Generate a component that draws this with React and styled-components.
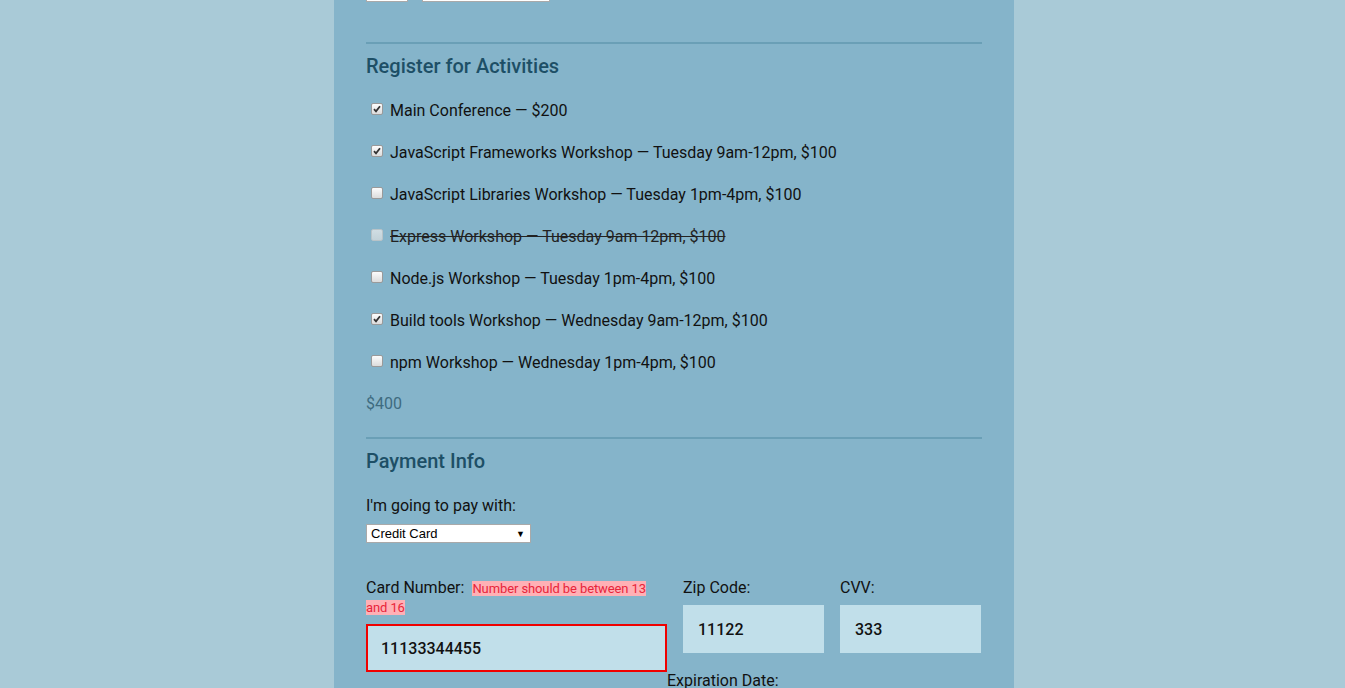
import React from 'react';
import styled, { createGlobalStyle } from 'styled-components';

const GlobalStyle = createGlobalStyle`
  html, body {
    margin: 0;
    padding: 0;
    background: #a9cad7;
    font-family: Roboto, "Liberation Sans", sans-serif;
    overflow: hidden;
  }
`;

const Page = styled.div`
  display: flex;
  justify-content: center;
  padding-left: 3px;
  height: 688px;
  overflow: hidden;
`;

const Form = styled.form`
  width: 616px;
  padding: 0 32px;
  background: #85b4ca;
  color: #111;
`;

const ShirtRow = styled.div`
  display: flex;
  gap: 14px;
  margin-top: -18px;
`;

const FakeSelect = styled.div`
  width: ${p => p.w}px;
  height: 18px;
  background: #fff;
  border: 1px solid #a9a9a9;
`;

const Rule = styled.hr`
  border: 0;
  height: 2px;
  background: #6a9fb6;
  margin: ${p => p.top}px 0 0;
`;

const Heading = styled.h2`
  margin: 0;
  padding-top: 10px;
  font-size: 20px;
  line-height: 24px;
  font-weight: 500;
  color: #1d4f66;
`;

const ActivityList = styled.div`
  margin-top: 11px;
  display: flex;
  flex-direction: column;
`;

const Activity = styled.label`
  display: flex;
  align-items: center;
  height: 42px;
  font-size: 16px;
  color: ${p => (p.disabled ? '#222' : '#111')};
  text-decoration: ${p => (p.disabled ? 'line-through' : 'none')};
`;

const Box = styled.span`
  box-sizing: border-box;
  width: 12px;
  height: 12px;
  margin: -3px 7px 0 5px;
  border: 1px solid ${p => (p.disabled ? '#b8c3c8' : '#9a9a9a')};
  border-radius: 2px;
  background: ${p => (p.disabled ? 'linear-gradient(#d0dde3, #c2d2d9)' : 'linear-gradient(#fcfcfc, #dcdcdc)')};
  display: flex;
  align-items: center;
  justify-content: center;
  flex-shrink: 0;
`;

const Total = styled.div`
  margin-top: 11px;
  font-size: 16px;
  line-height: 20px;
  color: #3e6b80;
`;

const PayLabel = styled.div`
  margin-top: 24px;
  font-size: 16px;
  line-height: 18px;
`;

const Select = styled.div`
  box-sizing: border-box;
  margin-top: 9px;
  width: 165px;
  height: 19px;
  background: #fff;
  border: 1px solid #a9a9a9;
  display: flex;
  align-items: center;
  justify-content: space-between;
  padding: 0 4px;
  font-family: "Liberation Sans", Arial, sans-serif;
  font-size: 13px;
  color: #000;
`;

const Arrow = styled.span`
  font-size: 9px;
  margin-right: 1px;
`;

const CardGrid = styled.div`
  margin-top: 35px;
  display: grid;
  grid-template-columns: 301px 1fr;
`;

const CardCol = styled.div`
  display: flex;
  flex-direction: column;
`;

const FieldLabel = styled.div`
  font-size: 16px;
  line-height: 19px;
`;

const ErrorTip = styled.span`
  margin-left: 8px;
  font-size: 13px;
  line-height: 15px;
  letter-spacing: -0.1px;
  background: #ffb0b5;
  color: #e8253a;
`;

const Input = styled.div`
  box-sizing: border-box;
  height: ${p => p.h}px;
  margin-top: ${p => p.mt}px;
  background: #c1dfea;
  border: 2px solid ${p => (p.error ? '#f00000' : 'transparent')};
  display: flex;
  align-items: center;
  padding-left: 13px;
  font-size: 16px;
  font-weight: 500;
  color: #111;
`;

const RightCol = styled.div`
  display: flex;
  flex-direction: column;
`;

const SmallFields = styled.div`
  display: grid;
  grid-template-columns: 141px 141px;
  gap: 16px;
  padding-left: 16px;
`;

const ExpLabel = styled.div`
  margin: -1px 0 0 301px;
  font-size: 16px;
  line-height: 20px;
`;

const Check = () => (
  <svg width="8" height="8" viewBox="0 0 8 8">
    <path d="M1 4.2 L3 6.3 L7 1.2" fill="none" stroke="#333" strokeWidth="1.8" />
  </svg>
);

const activities = [
  { text: 'Main Conference — $200', checked: true },
  { text: 'JavaScript Frameworks Workshop — Tuesday 9am-12pm, $100', checked: true },
  { text: 'JavaScript Libraries Workshop — Tuesday 1pm-4pm, $100' },
  { text: 'Express Workshop — Tuesday 9am 12pm, $100', disabled: true },
  { text: 'Node.js Workshop — Tuesday 1pm-4pm, $100' },
  { text: 'Build tools Workshop — Wednesday 9am-12pm, $100', checked: true },
  { text: 'npm Workshop — Wednesday 1pm-4pm, $100' },
];

export default function App() {
  return (
    <>
      <GlobalStyle />
      <Page>
        <Form>
          <ShirtRow>
            <FakeSelect w={40} />
            <FakeSelect w={126} />
          </ShirtRow>
          <Rule top={40} />
          <Heading>Register for Activities</Heading>
          <ActivityList>
            {activities.map(a => (
              <Activity key={a.text} disabled={a.disabled}>
                <Box disabled={a.disabled}>{a.checked && <Check />}</Box>
                {a.text}
              </Activity>
            ))}
          </ActivityList>
          <Total>$400</Total>
          <Rule top={23} />
          <Heading>Payment Info</Heading>
          <PayLabel>I'm going to pay with:</PayLabel>
          <Select>
            Credit Card <Arrow>▼</Arrow>
          </Select>
          <CardGrid>
            <CardCol>
              <FieldLabel>
                Card Number:
                <ErrorTip>Number should be between 13 and 16</ErrorTip>
              </FieldLabel>
              <Input error h={48} mt={8}>11133344455</Input>
            </CardCol>
            <RightCol>
              <SmallFields>
                <div>
                  <FieldLabel>Zip Code:</FieldLabel>
                  <Input h={48} mt={8}>11122</Input>
                </div>
                <div>
                  <FieldLabel>CVV:</FieldLabel>
                  <Input h={48} mt={8}>333</Input>
                </div>
              </SmallFields>
            </RightCol>
          </CardGrid>
          <ExpLabel>Expiration Date:</ExpLabel>
        </Form>
      </Page>
    </>
  );
}
